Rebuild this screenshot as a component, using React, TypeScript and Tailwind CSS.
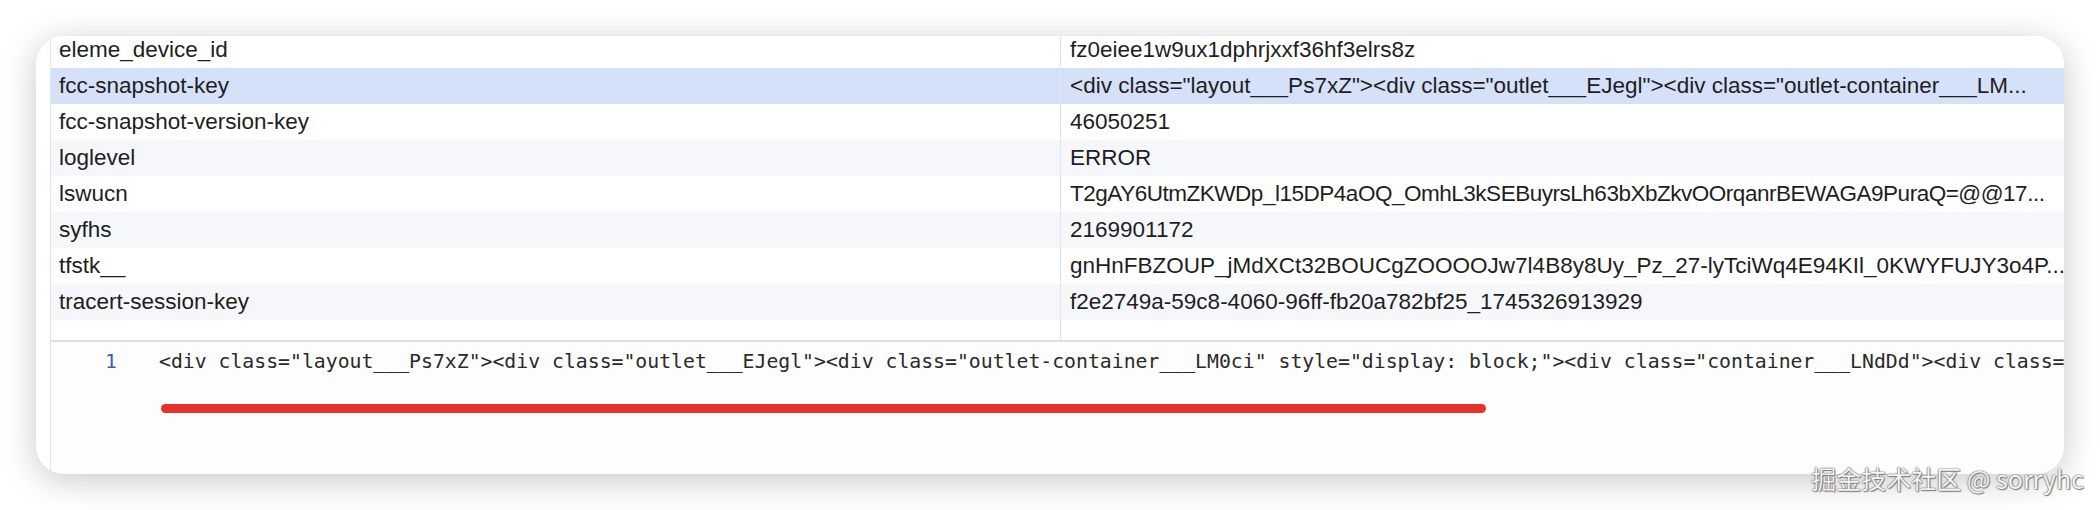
const rows = [
  { k: "eleme_device_id", v: "fz0eiee1w9ux1dphrjxxf36hf3elrs8z" },
  {
    k: "fcc-snapshot-key",
    v: '<div class="layout___Ps7xZ"><div class="outlet___EJegl"><div class="outlet-container___LM...',
    selected: true,
  },
  { k: "fcc-snapshot-version-key", v: "46050251" },
  { k: "loglevel", v: "ERROR" },
  {
    k: "lswucn",
    v: "T2gAY6UtmZKWDp_l15DP4aOQ_OmhL3kSEBuyrsLh63bXbZkvOOrqanrBEWAGA9PuraQ=@@17...",
    tight: true,
  },
  { k: "syfhs", v: "2169901172" },
  {
    k: "tfstk__",
    v: "gnHnFBZOUP_jMdXCt32BOUCgZOOOOJw7l4B8y8Uy_Pz_27-lyTciWq4E94KIl_0KWYFUJY3o4P...",
  },
  { k: "tracert-session-key", v: "f2e2749a-59c8-4060-96ff-fb20a782bf25_1745326913929" },
  { k: "", v: "" },
];

const code =
  '<div class="layout___Ps7xZ"><div class="outlet___EJegl"><div class="outlet-container___LM0ci" style="display: block;"><div class="container___LNdDd"><div class=';

export default function App() {
  return (
    <div className="relative w-[2100px] h-[510px] overflow-hidden bg-white pt-[36px] pl-[36px]">
      <div className="w-[2028px] h-[438px] rounded-[28px] bg-white shadow-[0_6px_34px_rgba(0,0,0,0.22)] overflow-hidden">
        <div className="ml-[14px] h-full border-l border-[#dfe5f0] flex flex-col">
          {/* cookie table */}
          <div className="h-[306px] shrink-0 overflow-hidden border-b-2 border-[#d7e0f2]">
            <div className="-mt-[4px] font-['Liberation_Sans',Arial,sans-serif] text-[22.5px] text-[#1e1e1e]">
              {rows.map((r, i) => (
                <div
                  key={i}
                  className={
                    "flex h-[36px] items-center " +
                    (r.selected
                      ? "bg-[#d5e1f8]"
                      : i % 2 === 1
                        ? "bg-[#f5f7fb]"
                        : "bg-white")
                  }
                >
                  <div className="w-[1009px] shrink-0 pl-[8px] whitespace-nowrap overflow-hidden">
                    {r.k}
                  </div>
                  <div className="h-full border-l border-[#e1e5ee]" />
                  <div
                    className={
                      "flex-1 min-w-0 pl-[9px] pr-[12px] whitespace-nowrap overflow-hidden " +
                      (r.tight ? "tracking-[-0.48px]" : "")
                    }
                  >
                    {r.v}
                  </div>
                </div>
              ))}
            </div>
          </div>

          {/* editor preview */}
          <div className="flex-1 bg-[#fdfdfd]">
            <div className="flex pt-[8px] h-[32px] items-center font-['DejaVu_Sans_Mono',monospace] text-[19.8px] leading-[24px]">
              <div className="w-[108px] shrink-0 pl-[54px] text-[#3c5fb8]">1</div>
              <div className="whitespace-nowrap text-[#2a2a2a]">{code}</div>
            </div>
            <div className="ml-[110px] mt-[30px] w-[1325px] h-[9px] rounded-full bg-[#e5322a]" />
          </div>
        </div>
      </div>

      <div className="absolute right-[16px] top-[462px] font-['Noto_Sans_CJK_SC','Liberation_Sans',sans-serif] text-[25px] leading-[32px] text-[#f4f4f4] [text-shadow:0_0_1px_#555,0_0_2px_#777,1px_1px_1px_#888]">
        掘金技术社区 @ sorryhc
      </div>
    </div>
  );
}
